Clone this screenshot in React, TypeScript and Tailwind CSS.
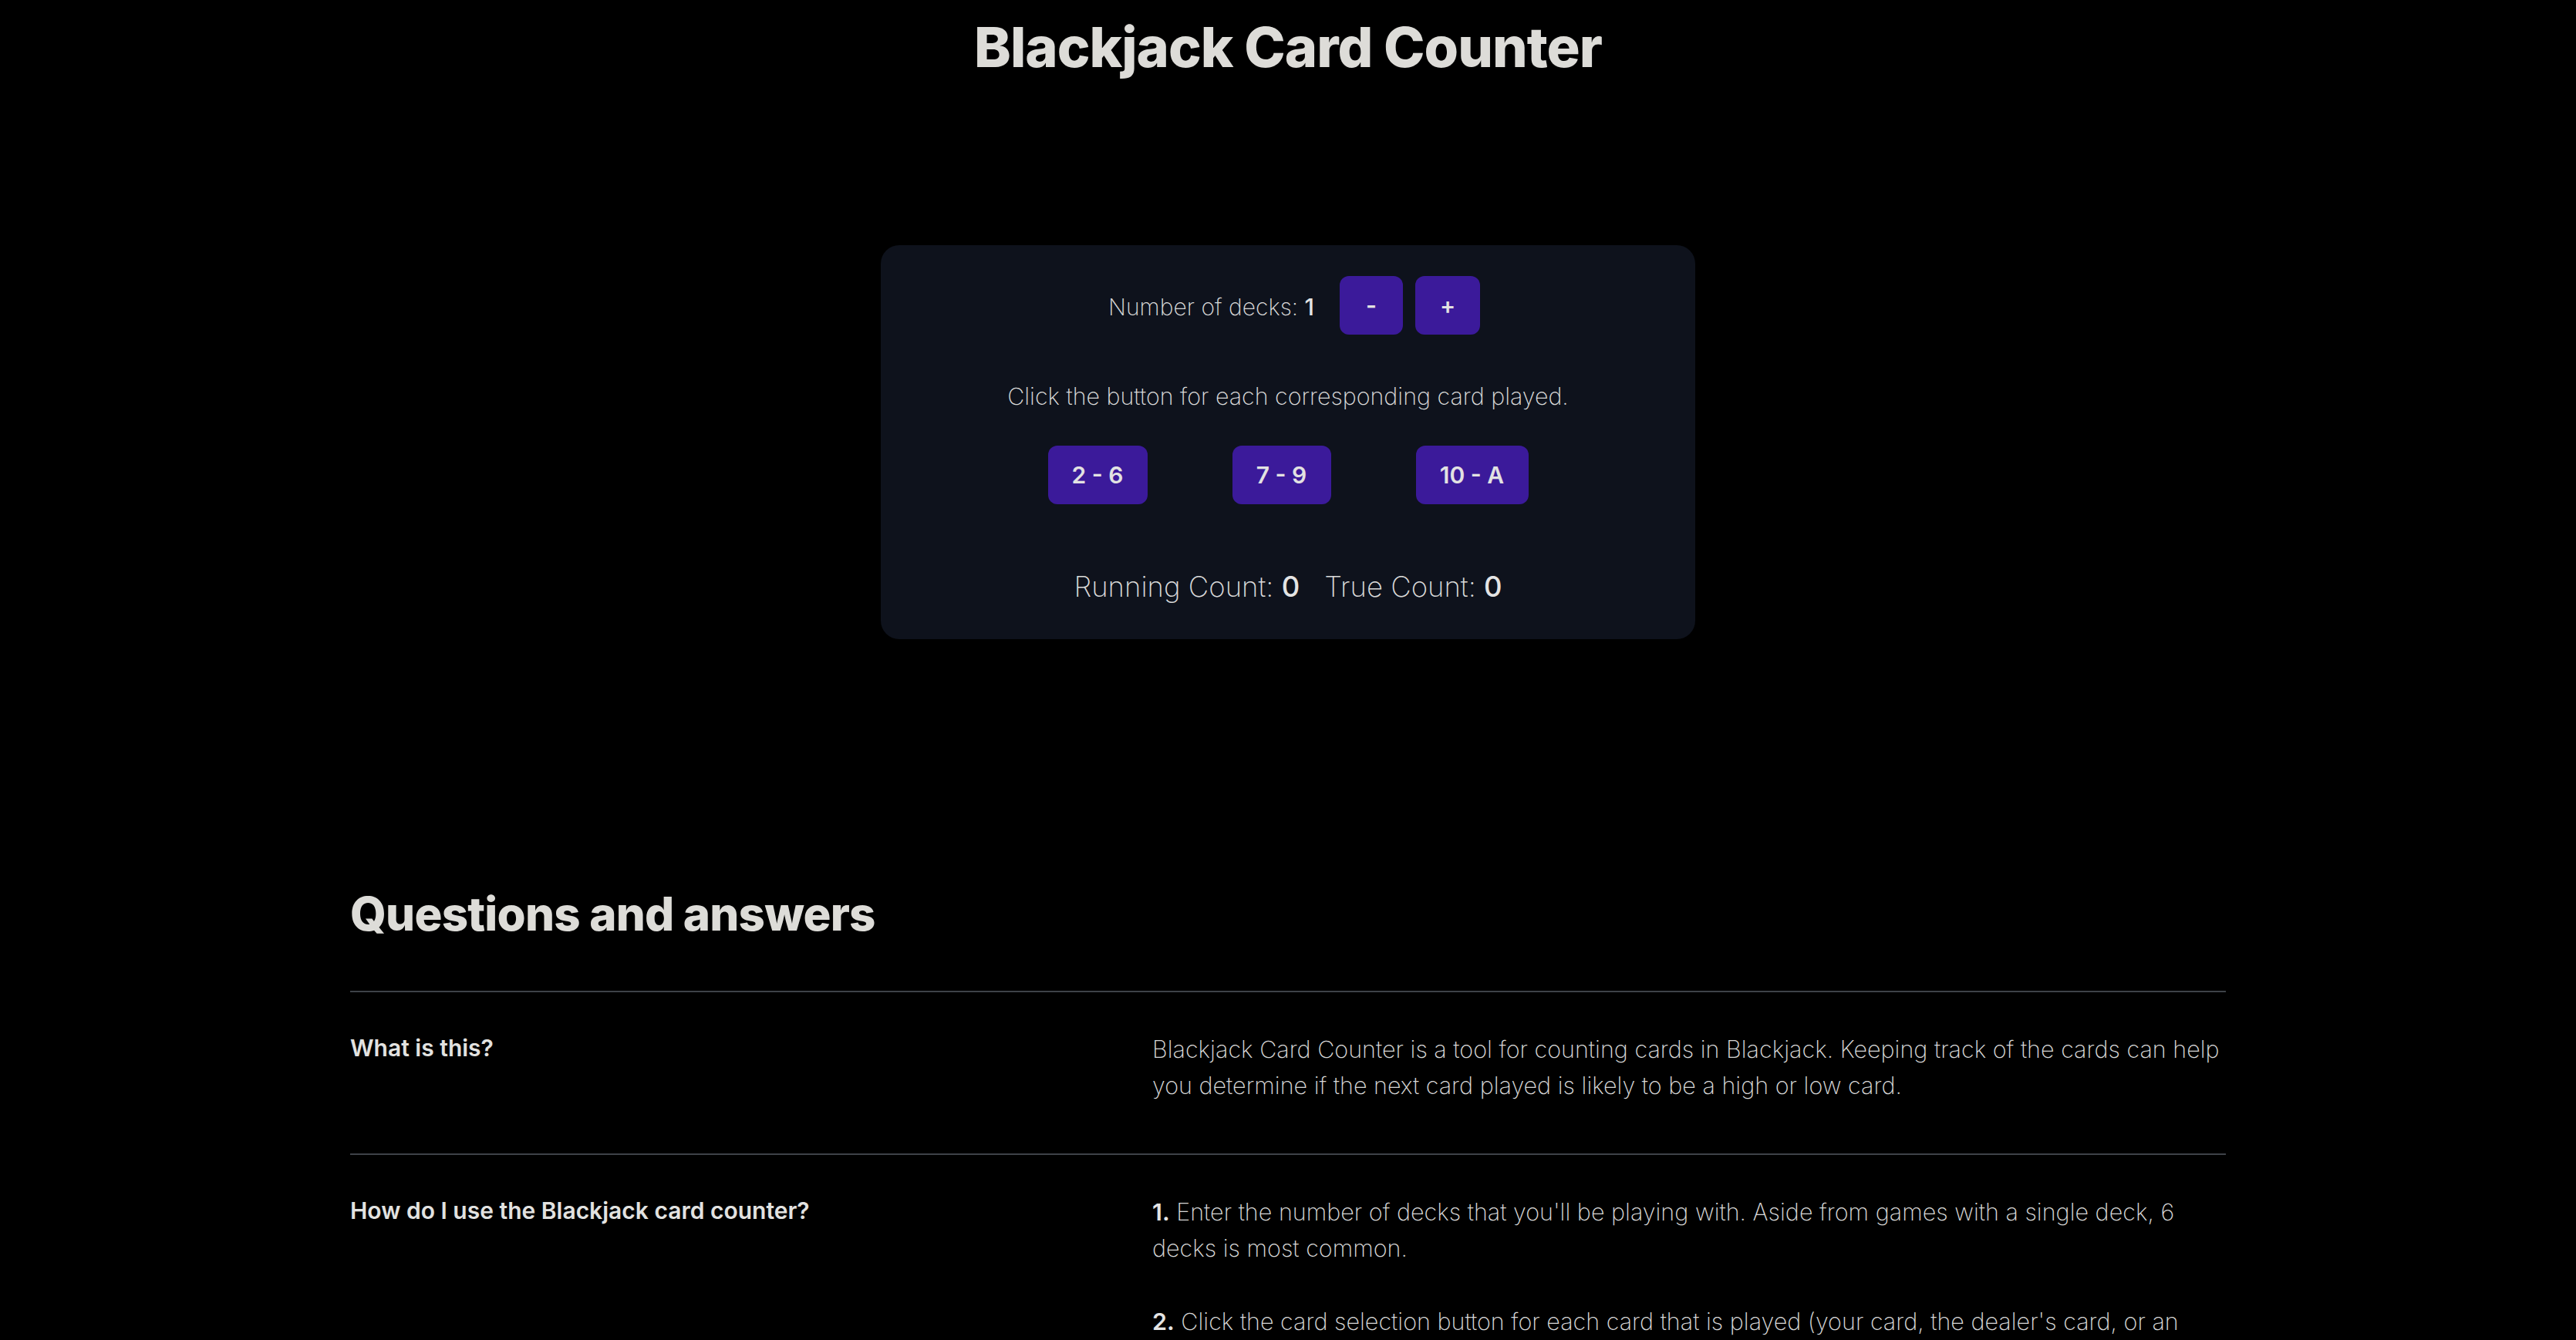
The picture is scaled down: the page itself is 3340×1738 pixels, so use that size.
import React from "react";

const font = { fontFamily: "Inter, 'Noto Sans', sans-serif" };

function PurpleButton({ children, className = "" }: { children: React.ReactNode; className?: string }) {
  return (
    <button
      className={
        "rounded-[12px] bg-[#3b1a9a] text-[30px] leading-[40px] font-semibold text-[#e2e2e2] py-[18px] " +
        className
      }
    >
      {children}
    </button>
  );
}

export default function App() {
  return (
    <div className="min-h-screen w-full bg-black text-[#dcdcd8]" style={font}>
      <h1 className="pt-[21px] text-center text-[72px] leading-[80px] font-extrabold tracking-[-1px] text-[#dddcd8]">
        Blackjack Card Counter
      </h1>

      <div className="mx-auto mt-[217px] w-[1056px] rounded-[24px] bg-[#0e121c] pt-[40px] pb-[44px]">
        <div className="flex items-center justify-center pl-[16px]">
          <span className="mr-[33px] pt-[4px] text-[30px] leading-[40px] font-extralight text-[#dadada]">
            Number of decks: <span className="font-medium text-[#e4e4e4]">1</span>
          </span>
          <div className="flex gap-[16px]">
            <PurpleButton className="w-[82px]">-</PurpleButton>
            <PurpleButton className="w-[84px]">+</PurpleButton>
          </div>
        </div>

        <p className="mt-[60px] text-center text-[30.4px] leading-[40px] font-extralight text-[#dadada]">
          Click the button for each corresponding card played.
        </p>

        <div className="mt-[44px] flex justify-center gap-[110px]">
          <PurpleButton className="w-[129px]">2 - 6</PurpleButton>
          <PurpleButton className="w-[128px]">7 - 9</PurpleButton>
          <PurpleButton className="w-[146px]">10 - A</PurpleButton>
        </div>

        <div className="mt-[83px] flex justify-center gap-[32px] text-[36.5px] leading-[48px] font-extralight text-[#dadada]">
          <span>
            Running Count: <span className="font-medium text-[#e4e4e4]">0</span>
          </span>
          <span>
            True Count: <span className="font-medium text-[#e4e4e4]">0</span>
          </span>
        </div>
      </div>

      <div className="mx-auto mt-[316px] max-w-[2560px] px-[64px]">
        <h2 className="text-[60px] leading-[80px] font-extrabold tracking-[-0.8px] text-[#dddcd8]">
          Questions and answers
        </h2>

        <dl className="mt-[60px]">
          <div className="grid grid-cols-12 gap-x-[64px] border-t-2 border-[#3e4248] pt-[50px]">
            <dt className="col-span-5 text-[30px] leading-[44px] font-semibold text-[#e2e2e0]">What is this?</dt>
            <dd className="col-span-7 text-[30.5px] leading-[47px] font-extralight text-[#d8d8d8]">
              Blackjack Card Counter is a tool for counting cards in Blackjack. Keeping track of the cards can help
              you determine if the next card played is likely to be a high or low card.
            </dd>
          </div>

          <div className="mt-[65px] grid grid-cols-12 gap-x-[64px] border-t-2 border-[#3e4248] pt-[50px]">
            <dt className="col-span-5 text-[30px] leading-[44px] font-semibold text-[#e2e2e0]">
              How do I use the Blackjack card counter?
            </dt>
            <dd className="col-span-7 text-[30.5px] leading-[47px] font-extralight text-[#d8d8d8]">
              <p>
                <span className="font-semibold text-[#e4e4e4]">1.</span> Enter the number of decks that you'll be
                playing with. Aside from games with a single deck, 6 decks is most common.
              </p>
              <p className="mt-[48px]">
                <span className="font-semibold text-[#e4e4e4]">2.</span> Click the card selection button for each
                card that is played (your card, the dealer's card, or an other player's card).
              </p>
              <p className="mt-[48px]">
                <span className="font-semibold text-[#e4e4e4]">3.</span> Use the running count and the true count to
                decide how much to bet on the next hand.
              </p>
            </dd>
          </div>
        </dl>
      </div>
    </div>
  );
}
